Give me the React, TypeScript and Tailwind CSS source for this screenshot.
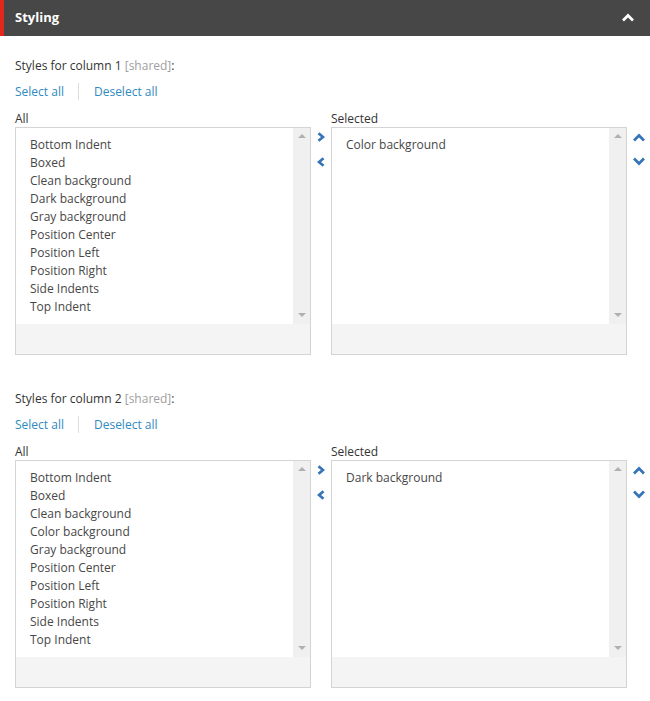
import React from "react";

const font = { fontFamily: '"Open Sans", "Noto Sans", Arial, sans-serif' };

function Chevron({ dir, className }: { dir: "up" | "down" | "left" | "right"; className?: string }) {
  const pts: Record<string, string> = {
    right: "1.5,1.2 6,5 1.5,8.8",
    left: "6.5,1.2 2,5 6.5,8.8",
    up: "1,7.5 6,2.5 11,7.5",
    down: "1,2.5 6,7.5 11,2.5",
  };
  const horiz = dir === "up" || dir === "down";
  return (
    <svg
      width={horiz ? 12 : 8}
      height={10}
      viewBox={horiz ? "0 0 12 10" : "0 0 8 10"}
      className={className}
    >
      <polyline points={pts[dir]} fill="none" stroke="currentColor" strokeWidth="2.7" strokeLinecap="butt" strokeLinejoin="miter" />
    </svg>
  );
}

function ListBox({ items }: { items: string[] }) {
  return (
    <div className="w-[296px] h-[228px] border border-[#d4d4d4] flex flex-col bg-[#f4f4f4]">
      <div className="h-[196px] flex bg-white">
        <div className="flex-1 pt-[8px] pl-[14px]">
          {items.map((it) => (
            <div key={it} className="h-[18px] leading-[18px] text-[12px] text-[#474747]">
              {it}
            </div>
          ))}
        </div>
        <div className="w-[17px] bg-[#f0f0f0] flex flex-col items-center justify-between pt-[6px] pb-[7px]">
          <div className="w-0 h-0 border-l-[4px] border-r-[4px] border-b-[4px] border-l-transparent border-r-transparent border-b-[#b0b0b0]" />
          <div className="w-0 h-0 border-l-[4px] border-r-[4px] border-t-[4px] border-l-transparent border-r-transparent border-t-[#b0b0b0]" />
        </div>
      </div>
      <div className="flex-1" />
    </div>
  );
}

function Section({ n, all, selected }: { n: number; all: string[]; selected: string[] }) {
  return (
    <div>
      <div className="text-[12px] leading-[16px] text-[#333]">
        Styles for column {n} <span className="text-[#a0a0a0]">[shared]</span>:
      </div>
      <div className="flex items-center mt-[9px] text-[12px] leading-[16px] text-[#2f8ac0]">
        <span>Select all</span>
        <div className="w-px h-[17px] bg-[#dcdcdc] ml-[14px] mr-[15px]" />
        <span>Deselect all</span>
      </div>
      <div className="flex mt-[11px]">
        <div>
          <div className="text-[12px] leading-[16px] text-[#333]">All</div>
          <ListBox items={all} />
        </div>
        <div className="w-[20px] flex flex-col items-center pt-[21px] gap-[15px] text-[#3574b8]">
          <Chevron dir="right" />
          <Chevron dir="left" />
        </div>
        <div>
          <div className="text-[12px] leading-[16px] text-[#333]">Selected</div>
          <ListBox items={selected} />
        </div>
        <div className="w-[22px] flex flex-col items-center pt-[22px] pl-[1px] gap-[13px] text-[#3574b8]">
          <Chevron dir="up" />
          <Chevron dir="down" />
        </div>
      </div>
    </div>
  );
}

export default function App() {
  return (
    <div className="w-[650px] h-[701px] bg-white" style={font}>
      <div className="h-9 bg-[#474747] border-l-4 border-[#e0281d] flex items-center justify-between pl-[11px] pr-[16px]">
        <span className="text-white font-bold text-[13px]">Styling</span>
        <Chevron dir="up" className="text-white" />
      </div>
      <div className="pl-[15px] pt-[22px] flex flex-col gap-[36px]">
        <Section
          n={1}
          all={[
            "Bottom Indent",
            "Boxed",
            "Clean background",
            "Dark background",
            "Gray background",
            "Position Center",
            "Position Left",
            "Position Right",
            "Side Indents",
            "Top Indent",
          ]}
          selected={["Color background"]}
        />
        <Section
          n={2}
          all={[
            "Bottom Indent",
            "Boxed",
            "Clean background",
            "Color background",
            "Gray background",
            "Position Center",
            "Position Left",
            "Position Right",
            "Side Indents",
            "Top Indent",
          ]}
          selected={["Dark background"]}
        />
      </div>
    </div>
  );
}
